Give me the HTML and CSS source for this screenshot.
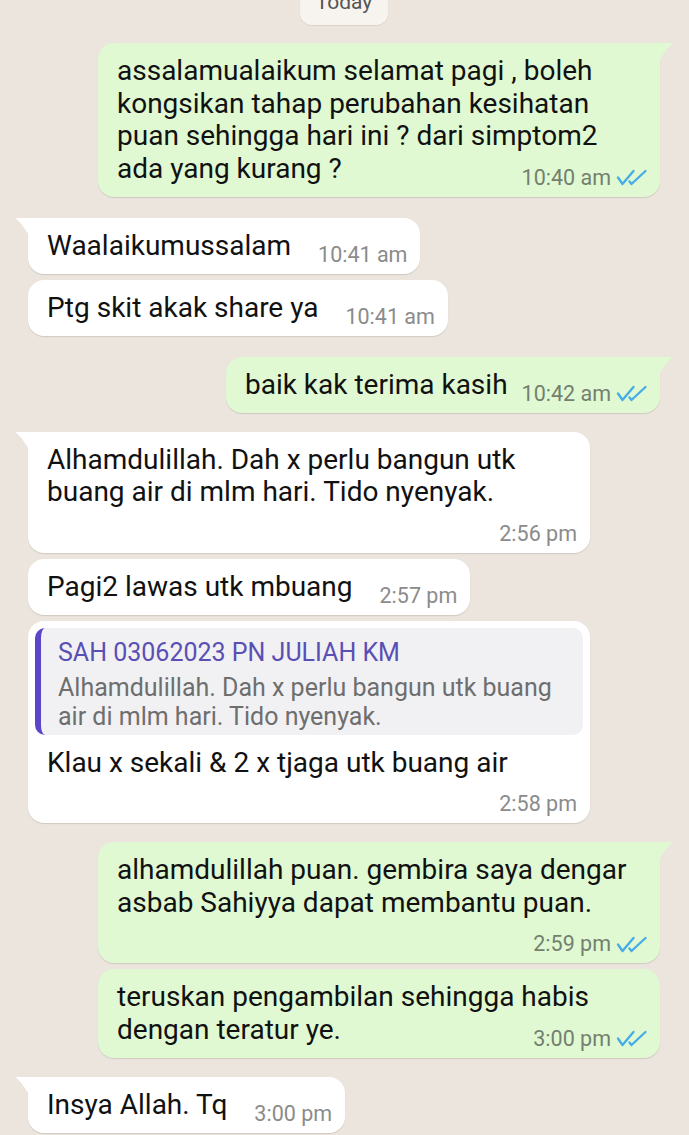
FILE: index.html
```html
<!DOCTYPE html>
<html lang="ms">
<head>
<meta charset="utf-8">
<title>Chat</title>
<link rel="stylesheet" href="styles.css">
</head>
<body>
<main class="chat">
  <div class="day">Today</div>

  <div class="msg out tail full first">
    <p class="body">assalamualaikum selamat pagi , boleh<br>kongsikan tahap perubahan kesihatan<br>puan sehingga hari ini ? dari simptom2<br>ada yang kurang ?<span class="meta"><span class="time">10:40 am</span><svg class="ticks" viewBox="0 0 32 17"><path d="M2 8.5 L6.5 15 L17.5 2"/><path d="M13.5 12.5 L15.5 15 L29.5 2"/></svg></span></p>
  </div>

  <div class="msg in tail grp-lg">
    <p class="body">Waalaikumussalam<span class="meta"><span class="time">10:41 am</span></span></p>
  </div>

  <div class="msg in">
    <p class="body">Ptg skit akak share ya<span class="meta"><span class="time">10:41 am</span></span></p>
  </div>

  <div class="msg out tail grp-lg">
    <p class="body">baik kak terima kasih<span class="meta"><span class="time">10:42 am</span><svg class="ticks" viewBox="0 0 32 17"><path d="M2 8.5 L6.5 15 L17.5 2"/><path d="M13.5 12.5 L15.5 15 L29.5 2"/></svg></span></p>
  </div>

  <div class="msg in tail grp full">
    <p class="body">Alhamdulillah. Dah x perlu bangun utk<br>buang air di mlm hari. Tido nyenyak.<span class="meta"><span class="time">2:56 pm</span></span></p>
  </div>

  <div class="msg in">
    <p class="body">Pagi2 lawas utk mbuang<span class="meta"><span class="time">2:57 pm</span></span></p>
  </div>

  <div class="msg in full quoted">
    <div class="quote">
      <div class="q-name">SAH 03062023 PN JULIAH KM</div>
      <div class="q-text">Alhamdulillah. Dah x perlu bangun utk buang<br>air di mlm hari. Tido nyenyak.</div>
    </div>
    <p class="body">Klau x sekali &amp; 2 x tjaga utk buang air<span class="meta"><span class="time">2:58 pm</span></span></p>
  </div>

  <div class="msg out tail grp full">
    <p class="body">alhamdulillah puan. gembira saya dengar<br>asbab Sahiyya dapat membantu puan.<span class="meta"><span class="time">2:59 pm</span><svg class="ticks" viewBox="0 0 32 17"><path d="M2 8.5 L6.5 15 L17.5 2"/><path d="M13.5 12.5 L15.5 15 L29.5 2"/></svg></span></p>
  </div>

  <div class="msg out full">
    <p class="body">teruskan pengambilan sehingga habis<br>dengan teratur ye.<span class="meta"><span class="time">3:00 pm</span><svg class="ticks" viewBox="0 0 32 17"><path d="M2 8.5 L6.5 15 L17.5 2"/><path d="M13.5 12.5 L15.5 15 L29.5 2"/></svg></span></p>
  </div>

  <div class="msg in tail grp">
    <p class="body">Insya Allah. Tq<span class="meta"><span class="time">3:00 pm</span></span></p>
  </div>
</main>
</body>
</html>
```

FILE: styles.css
```css
* { box-sizing: border-box; }

html, body { margin: 0; }

body {
  background: #ebe5dd;
  font-family: Roboto, "Noto Sans", "Liberation Sans", sans-serif;
  color: #111111;
  width: 689px;
  height: 1135px;
  overflow: hidden;
}

.chat {
  display: flex;
  flex-direction: column;
  padding: 0 29px 0 28px;
}

.day {
  align-self: center;
  margin-top: -15px;
  padding: 5px 16px 10px;
  background: #f7f4f0;
  border-radius: 12px;
  font-size: 21px;
  line-height: 25px;
  color: #555;
  box-shadow: 0 1px 1px rgba(0, 0, 0, 0.08);
}

.msg {
  position: relative;
  display: flow-root;
  width: fit-content;
  max-width: 562px;
  margin-top: 6px;
  padding: 12px 13px 6px 19px;
  border-radius: 16px;
  box-shadow: 0 1px 1px rgba(0, 0, 0, 0.12);
}

.msg.grp { margin-top: 19px; }
.msg.grp-lg { margin-top: 21px; }
.day + .msg { margin-top: 18px; }

.in { align-self: flex-start; background: #ffffff; }
.out { align-self: flex-end; background: #e0f9d3; padding-right: 12px; }

.full { width: 562px; }

.tail.in { border-top-left-radius: 0; }
.tail.out { border-top-right-radius: 0; }

.tail::before {
  content: "";
  position: absolute;
  top: 0;
  width: 14px;
  height: 18px;
  background: inherit;
}

.tail.in::before {
  left: -13px;
  clip-path: polygon(4% 0, 100% 0, 100% 100%, 70% 62%, 40% 30%, 10% 9%, 0 3%);
}

.tail.out::before {
  right: -13px;
  clip-path: polygon(0 0, 96% 0, 100% 3%, 90% 9%, 60% 30%, 30% 62%, 0 100%);
}

.body {
  margin: 0;
  font-size: 28px;
  line-height: 32.5px;
}

.meta {
  float: right;
  display: flex;
  align-items: center;
  margin: 12px 0 0 27px;
  font-size: 21.5px;
  line-height: 26px;
  color: #8b8b8b;
}

.out .meta {
  margin-left: 14px;
  color: #74806f;
}

.ticks {
  width: 32px;
  height: 17px;
  margin-left: 5px;
  fill: none;
  stroke: #44ace6;
  stroke-width: 2.3;
  stroke-linecap: round;
  stroke-linejoin: round;
}

.msg.quoted { padding: 7px 7px 6px 7px; }

.quote {
  background: #f1f1f3;
  border-left: 6px solid #5b45c9;
  border-radius: 10px;
  padding: 10px 12px 4px 17px;
}

.q-name {
  font-size: 25px;
  line-height: 30px;
  color: #5a4fb5;
  margin-bottom: 5px;
}

.q-text {
  font-size: 25px;
  line-height: 29px;
  color: #6e6e6e;
}

.quoted .body { margin: 12px 6px 0 12px; }
```
